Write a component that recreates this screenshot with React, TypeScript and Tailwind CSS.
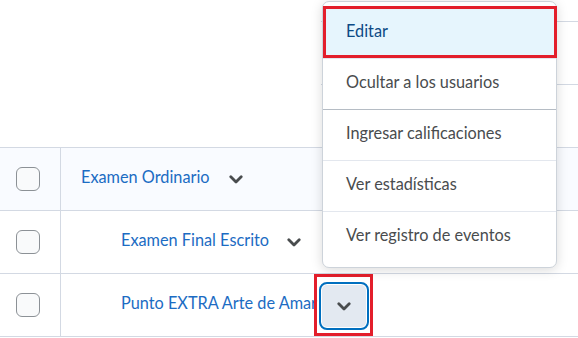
import { ReactNode } from 'react'

const Chevron = ({ className = '' }: { className?: string }) => (
  <svg className={className} width="14" height="9" viewBox="0 0 14 9" fill="none">
    <path d="M1.8 1.8L7 7L12.2 1.8" stroke="#494c4e" strokeWidth="2.8" strokeLinecap="round" strokeLinejoin="round" />
  </svg>
)

const Checkbox = () => (
  <div className="w-[24px] h-[24px] rounded-[6px] border border-[#8c9196] bg-[#f9fafb]" />
)

function Row({ children, shaded = false }: { children: ReactNode; shaded?: boolean }) {
  return (
    <div className={`flex h-[63px] border-t border-[#d3d9e3] ${shaded ? 'bg-[#f9fbff]' : 'bg-white'}`}>
      <div className="w-[61px] shrink-0 border-r border-[#d3d9e3] flex items-center pl-[16px]">
        <Checkbox />
      </div>
      <div className="flex-1 flex items-center min-w-0">{children}</div>
    </div>
  )
}

const menuItems = ['Editar', 'Ocultar a los usuarios', 'Ingresar calificaciones', 'Ver estadísticas', 'Ver registro de eventos']

export default function App() {
  return (
    <div className="relative w-[578px] h-[338px] bg-white overflow-hidden" style={{ fontFamily: 'Lato, "Open Sans", sans-serif' }}>
      <div className="flex h-[147px]">
        <div className="w-[321px] shrink-0" />
        <div className="flex-1 pt-[21px]">
          <div className="h-[64px] border-t border-b border-[#d3d9e3]" />
        </div>
      </div>

      <Row shaded>
        <span className="pl-[20px] pb-[4px] text-[16.3px] text-[#1c6cc3]">Examen Ordinario</span>
        <Chevron className="ml-[19px]" />
      </Row>
      <Row>
        <span className="pl-[60px] pb-[4px] text-[16.3px] text-[#1c6cc3]">Examen Final Escrito</span>
        <Chevron className="ml-[18px]" />
      </Row>
      <div className="border-b border-[#d3d9e3]">
        <Row>
          <span className="pl-[60px] pb-[4px] w-[258px] shrink-0 overflow-hidden whitespace-nowrap text-[16.3px] text-[#1c6cc3]">
            Punto EXTRA Arte de Amar
          </span>
          <div className="relative mt-[1px]">
            <button className="w-[50px] h-[48px] rounded-[8px] border-2 border-[#006fbf] bg-[#e3e9f1] ring-1 ring-inset ring-white flex items-center justify-center">
              <Chevron className="mt-[1px]" />
            </button>
            <div className="absolute -left-[5px] -top-[8px] w-[59px] h-[62px] border-[3px] border-[#e31e2b]" />
          </div>
        </Row>
      </div>

      <div className="absolute left-[322px] top-[1px] w-[235px] rounded-[7px] border border-[#cdd3da] bg-white shadow-[0_2px_12px_rgba(0,0,0,0.15)] pt-[5px] pb-[5px]">
        {menuItems.map((item, i) => (
          <div
            key={item}
            className={`relative h-[51px] flex items-center pl-[23px] pb-[3px] text-[16.3px] ${
              i === 0 ? 'bg-[#e6f5fd] text-[#0d4a85]' : 'text-[#494c4e]'
            } ${i > 0 ? (i === 2 ? 'border-t border-[#b5bcc4]' : 'border-t border-[#e3e7ee]') : ''}`}
          >
            {item}
            {i === 0 && <div className="absolute left-0 -right-[1px] -top-[1px] bottom-0 border-[3px] border-[#e31e2b]" />}
          </div>
        ))}
      </div>
    </div>
  )
}
